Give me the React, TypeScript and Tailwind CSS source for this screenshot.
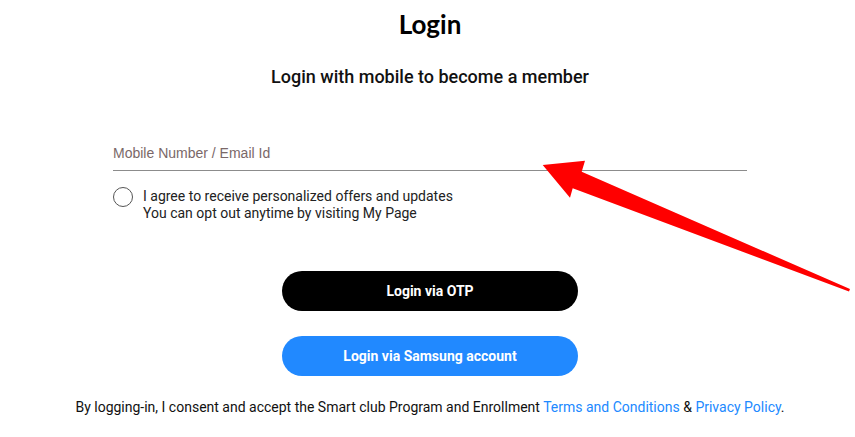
import React from "react";

export default function App() {
  return (
    <div className="relative w-[855px] h-[437px] overflow-hidden bg-white" style={{ fontFamily: "Roboto, 'Liberation Sans', sans-serif" }}>
      <div className="pl-[5px] flex flex-col items-center">
        <h1 className="mt-[9px] h-[30px] leading-[30px] text-[26px] font-bold text-black" style={{ fontFamily: "Lato, 'Liberation Sans', sans-serif" }}>Login</h1>
        <h2 className="mt-[27px] h-[22px] leading-[22px] text-[18px] font-medium text-[#111]">Login with mobile to become a member</h2>
        <div className="mt-[55px] w-[634px] h-[28px] border-b border-[#8c8c8c] flex items-start pt-[1px]">
          <span className="text-[14px] leading-[18px] text-[#7a6868]" style={{ fontFamily: "'Liberation Sans', Arial, sans-serif" }}>Mobile Number / Email Id</span>
        </div>
        <div className="w-[634px] mt-[17px] flex items-start gap-[10px]">
          <div className="mt-[-1px] w-[20px] h-[20px] rounded-full border border-[#555] shrink-0"></div>
          <div className="text-[14px] leading-[17px] text-[#222]">
            <div>I agree to receive personalized offers and updates</div>
            <div>You can opt out anytime by visiting My Page</div>
          </div>
        </div>
        <button className="mt-[49px] w-[296px] h-[40px] rounded-full bg-black text-white text-[14px] font-bold">Login via OTP</button>
        <button className="mt-[25px] w-[296px] h-[40px] rounded-full bg-[#2189ff] text-white text-[14px] font-bold">Login via Samsung account</button>
        <p className="mt-[22px] text-[14px] leading-[18px] text-[#111]">
          By logging-in, I consent and accept the Smart club Program and Enrollment{" "}
          <span className="text-[#2189ff]">Terms and Conditions</span> &amp;{" "}
          <span className="text-[#2189ff]">Privacy Policy</span>.
        </p>
      </div>
      <svg className="absolute left-0 top-0 pointer-events-none" width="855" height="437" viewBox="0 0 855 437">
        <polygon points="542.7,165 585,160.7 581.7,171.7 850,289 849,291.5 572.7,188.3 570,197.7" fill="#ff0000" />
      </svg>
    </div>
  );
}
